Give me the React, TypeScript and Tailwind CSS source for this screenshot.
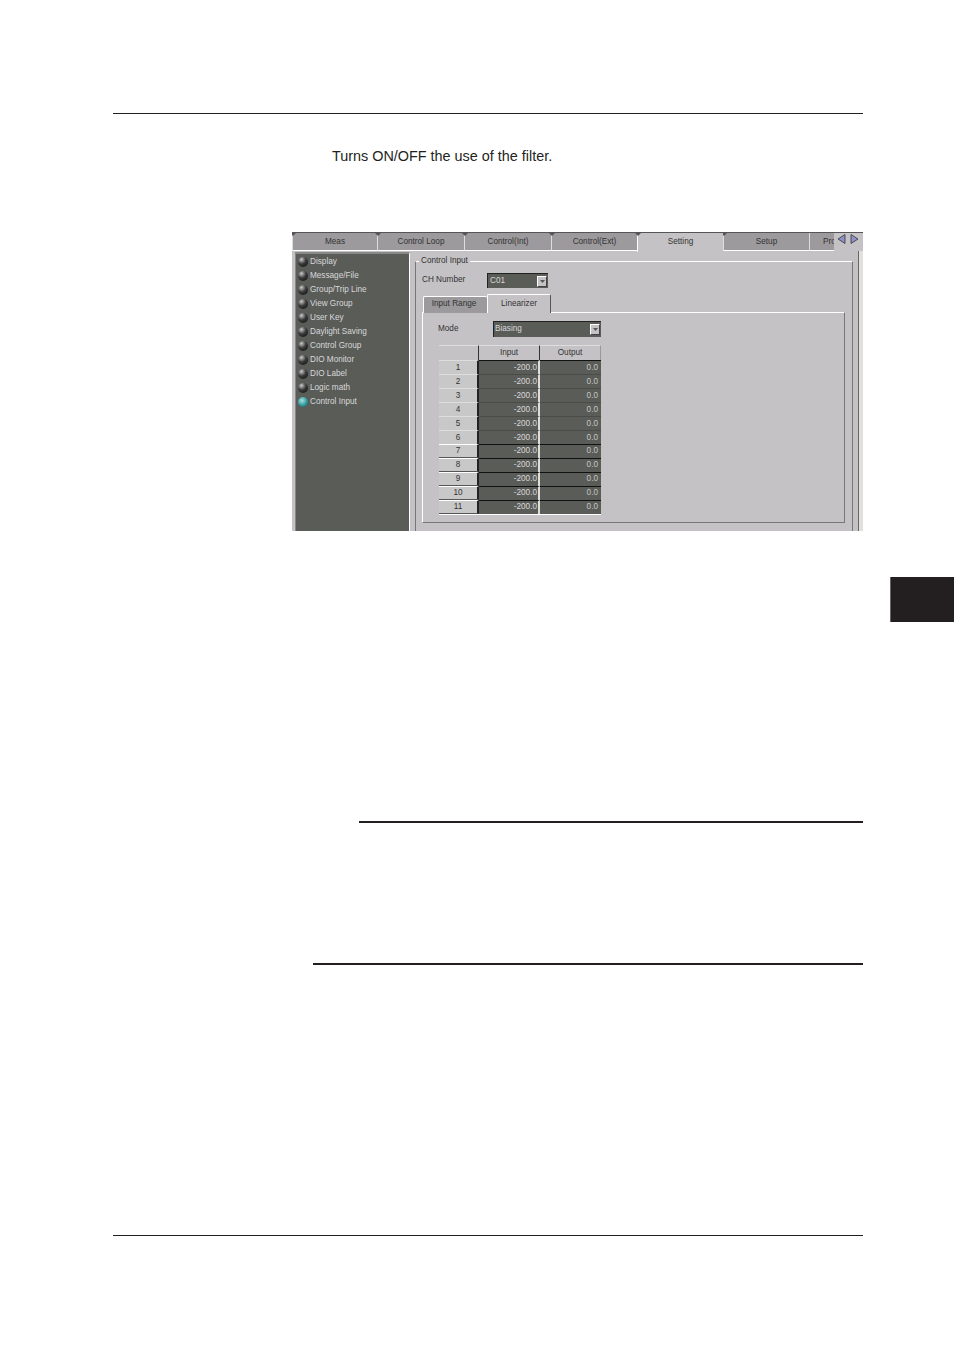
import React from "react";

const tabs = [
    { label: "Meas", width: "w-[85px]" },
    { label: "Control Loop", width: "w-[87px]" },
    { label: "Control(Int)", width: "w-[87px]" },
    { label: "Control(Ext)", width: "w-[86px]" },
    { label: "Setting", width: "w-[86px]", active: true },
    { label: "Setup", width: "w-[86px]" },
];

const menuItems = [
    "Display",
    "Message/File",
    "Group/Trip Line",
    "View Group",
    "User Key",
    "Daylight Saving",
    "Control Group",
    "DIO Monitor",
    "DIO Label",
    "Logic math",
    "Control Input",
];

const rows = [1, 2, 3, 4, 5, 6, 7, 8, 9, 10, 11];

const Led = ({ on }: { on?: boolean }) => (
    <span
        className={
            on
                ? "w-[10px] h-[10px] rounded-full shrink-0 bg-[radial-gradient(circle_at_40%_35%,#a8e0e0,#2f9a9e_55%,#14494c)]"
                : "w-[10px] h-[10px] rounded-full shrink-0 bg-[radial-gradient(circle_at_35%_25%,#c8c8c8,#3a3a3a_45%,#0c0c0c)]"
        }
    />
);

const ComboArrow = () => (
    <span className="w-[10px] h-[11px] bg-[#c5c2c5] border border-t-white border-l-white border-r-[#444] border-b-[#444] flex items-center justify-center shrink-0">
        <svg width="5" height="3" viewBox="0 0 5 3">
            <path d="M0 0h5L2.5 3z" fill="#555" />
        </svg>
    </span>
);

const Window = () => (
    <div className="w-[571px] h-[299px] overflow-hidden bg-[#c5c2c5] flex flex-col border-t border-t-[#555] font-['Liberation_Sans',sans-serif] text-[8.2px] text-[#333]">
        <div className="flex h-[18px] shrink-0 relative">
            {tabs.map((tab) => (
                <div
                    key={tab.label}
                    className={
                        tab.active
                            ? "relative shrink-0 h-[19px] flex items-center justify-center bg-[#c5c2c5] border-l border-l-white z-10 " +
                              tab.width
                            : "relative shrink-0 h-[18px] pt-[1px] flex items-center justify-center bg-[#9c9a9c] border-b border-b-white border-l border-l-[#ddd] " +
                              tab.width
                    }
                >
                    {tab.label}
                    <span className="absolute -left-[3px] top-0 w-0 h-0 border-l-[3px] border-r-[3px] border-t-[3px] border-l-transparent border-r-transparent border-t-[#555]" />
                </div>
            ))}
            <div className="flex-1 min-w-0 h-[18px] pt-[1px] bg-[#9c9a9c] border-b border-b-white border-l border-l-[#ddd] pl-[13px] flex items-center justify-between">
                <span className="whitespace-nowrap w-[10px]">Pro</span>
                <div className="relative z-10 flex items-start h-[18px] -mt-[1px] bg-[#c5c2c5] pr-[3px] pl-[2px] gap-[2px]">
                    <svg width="11" height="12" viewBox="0 0 11 12">
                        <path d="M9 1.5v9L2 6z" fill="#8f90c8" stroke="#333" strokeWidth="0.8" />
                    </svg>
                    <svg width="11" height="12" viewBox="0 0 11 12">
                        <path d="M2 1.5v9L9 6z" fill="#8f90c8" stroke="#333" strokeWidth="0.8" />
                    </svg>
                </div>
            </div>
        </div>
        <div className="flex flex-1 min-h-0 border-r-[4px] border-r-[#e2e0da]">
            <div className="w-[115px] ml-[3px] mt-[1px] shrink-0 bg-[#5a5c58] border-t-2 border-l border-r border-t-[#888] border-l-[#888] border-r-white pt-[1px] pl-[2px]">
                {menuItems.map((item) => (
                    <div
                        key={item}
                        className="h-[14px] flex items-center gap-[2px] text-[#d8d8d8]"
                    >
                        <Led on={item === "Control Input"} />
                        <span className="whitespace-nowrap">{item}</span>
                    </div>
                ))}
            </div>
            <div className="flex-1 min-w-0 pl-[5px] pr-[5px] pt-[5px] border-r border-r-[#666]">
                <fieldset className="border border-t-white border-l-[#777] border-r-[#777] border-b-0 h-[300px] px-[6px]">
                    <legend className="-ml-[3px] px-[2px] leading-[10px]">Control Input</legend>
                    <div className="flex items-center h-[15px] mt-[7px]">
                        <span className="w-[65px] whitespace-nowrap">CH Number</span>
                        <div className="w-[61px] h-[15px] bg-[#5a5c58] border-t border-l border-t-[#222] border-l-[#222] text-[#d8d8d8] flex items-center justify-between pl-[2px] pr-[1px]">
                            C01
                            <ComboArrow />
                        </div>
                    </div>
                    <div className="flex mt-[6px] h-[19px] items-end pl-[1px]">
                        <div className="w-[64px] h-[17px] pr-[3px] pb-[1px] bg-[#9c9a9c] border-t border-l border-t-white border-l-white rounded-t-[2px] flex items-center justify-center">
                            Input Range
                        </div>
                        <div className="w-[64px] h-[19px] bg-[#c5c2c5] border-t border-l border-r border-t-white border-l-white border-r-[#555] rounded-t-[2px] flex items-center justify-center relative z-10">
                            Linearizer
                        </div>
                    </div>
                    <div className="w-[423px] h-[211px] border border-t-white border-l-white border-r-[#777] border-b-[#777] -mt-[1px] pl-[15px] pt-[8px]">
                        <div className="flex items-center h-[16px]">
                            <span className="w-[55px]">Mode</span>
                            <div className="w-[108px] h-[16px] bg-[#5a5c58] border-t border-l border-t-[#222] border-l-[#222] text-[#d8d8d8] flex items-center justify-between pl-[1px] pr-[1px]">
                                Biasing
                                <ComboArrow />
                            </div>
                        </div>
                        <div className="w-[162px] ml-[1px] mt-[7px]">
                            <div className="flex h-[16px] pt-[1px]">
                                <div className="w-[40px] border-t border-t-[#ddd] border-r border-r-[#333]" />
                                <div className="w-[61px] border-t border-t-[#ddd] border-r border-r-[#333] flex items-center justify-center">
                                    Input
                                </div>
                                <div className="flex-1 border-t border-t-[#ddd] border-r border-r-[#999] flex items-center justify-center">
                                    Output
                                </div>
                            </div>
                            <div className="border-b border-b-white">
                                {rows.map((row) => (
                                    <div key={row} className="flex h-[14px]">
                                        <div
                                            className={
                                                row >= 7
                                                    ? "w-[40px] bg-[#c8c8c8] border-t border-t-white border-b border-b-[#555] border-r-2 border-r-[#222] flex items-center justify-center"
                                                    : "w-[40px] bg-[#c8c8c8] pt-[1px] border-t border-t-[#ddd] border-r-2 border-r-[#222] flex items-center justify-center"
                                            }
                                        >
                                            {row}
                                        </div>
                                        <div
                                            className={
                                                row >= 7
                                                    ? "w-[61px] bg-[#5a5c58] border-t border-t-[#111] border-r-2 border-r-[#ddd] text-[#d8d8d8] flex items-center justify-end pr-[1px]"
                                                    : row === 1
                                                      ? "w-[61px] bg-[#5a5c58] pt-[1px] border-t border-t-[#111] border-r-2 border-r-[#ddd] text-[#d8d8d8] flex items-center justify-end pr-[1px]"
                                                      : "w-[61px] bg-[#5a5c58] pt-[1px] border-t border-t-[#4a4c48] border-r-2 border-r-[#ddd] text-[#d8d8d8] flex items-center justify-end pr-[1px]"
                                            }
                                        >
                                            -200.0
                                        </div>
                                        <div
                                            className={
                                                row >= 7
                                                    ? "flex-1 bg-[#5a5c58] border-t border-t-[#111] text-[#c5c5c5] flex items-center justify-end pr-[3px]"
                                                    : row === 1
                                                      ? "flex-1 bg-[#5a5c58] pt-[1px] border-t border-t-[#111] text-[#c5c5c5] flex items-center justify-end pr-[3px]"
                                                      : "flex-1 bg-[#5a5c58] pt-[1px] border-t border-t-[#4a4c48] text-[#c5c5c5] flex items-center justify-end pr-[3px]"
                                            }
                                        >
                                            0.0
                                        </div>
                                    </div>
                                ))}
                            </div>
                        </div>
                    </div>
                </fieldset>
            </div>
        </div>
    </div>
);

const App = () => {
    return (
        <div className="w-[954px] h-[1350px] bg-white pt-[113px] font-['Liberation_Sans',sans-serif] text-[#231f20]">
            <div className="ml-[113px] w-[750px] h-px bg-[#231f20]" />
            <p className="ml-[332px] mt-[34px] text-[14.4px] leading-[16px]">
                Turns ON/OFF the use of the filter.
            </p>
            <div className="ml-[292px] mt-[68px]">
                <Window />
            </div>
            <div className="ml-[890px] mt-[46px] w-[64px] h-[45px] bg-[#231f20] border-l border-l-[#666]" />
            <div className="ml-[359px] mt-[199px] w-[504px] h-[2px] bg-[#231f20]" />
            <div className="ml-[313px] mt-[140px] w-[550px] h-[2px] bg-[#231f20]" />
            <div className="ml-[113px] mt-[270px] w-[750px] h-px bg-[#231f20]" />
        </div>
    );
};

export default App;
